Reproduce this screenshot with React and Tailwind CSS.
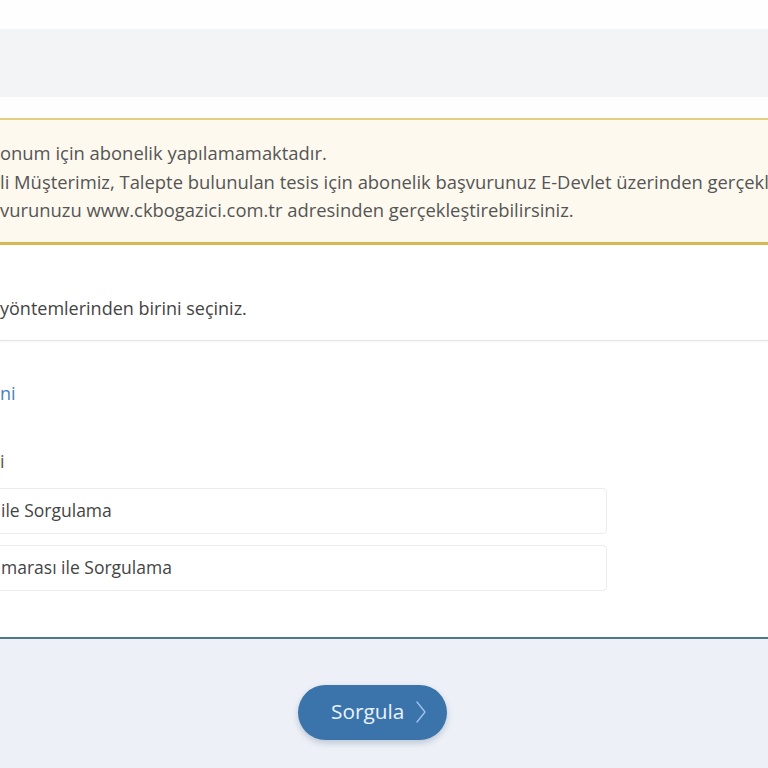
import React from "react";

function Chevron() {
  return (
    <svg width="12" height="24" viewBox="0 0 12 24" fill="none" className="ml-[11px]">
      <path d="M2 2 L10 12 L2 22" stroke="#9fc3ea" strokeWidth="1.4" strokeLinecap="round" strokeLinejoin="round" />
    </svg>
  );
}

export default function App() {
  return (
    <div className="w-[768px] h-[768px] overflow-hidden bg-white text-[#4a4a4a]" style={{ fontFamily: '"Open Sans", "Noto Sans", sans-serif' }}>
      <div className="h-[29px] bg-[#fefefe]" />
      <div className="h-[68px] bg-[#f3f4f6]" />
      <div className="h-[21px] bg-[#fefefe]" />
      <div className="border-t-2 border-b-[3px] border-t-[#e2cf7e] border-b-[#d6b756] bg-[#fdf9ef] pt-[19px] pb-[17px] text-[18.4px] leading-[28.5px] text-[#555555] whitespace-nowrap">
        <div>onum için abonelik yapılamamaktadır.</div>
        <div>li Müşterimiz, Talepte bulunulan tesis için abonelik başvurunuz E-Devlet üzerinden gerçekleştirilemez.</div>
        <div>vurunuzu www.ckbogazici.com.tr adresinden gerçekleştirebilirsiniz.</div>
      </div>
      <div className="pt-[49px] pb-[18px] text-[18px] leading-[28px] text-[#444444] border-b border-[#e4e4e4] shadow-[0_1px_2px_rgba(0,0,0,0.04)] whitespace-nowrap">
        yöntemlerinden birini seçiniz.
      </div>
      <div className="pt-[38px] pb-[46px] border-b-2 border-[#4f7889] whitespace-nowrap">
        <div className="text-[18px] leading-[28px] text-[#4682bd]">ni</div>
        <div className="mt-[40px] text-[18px] leading-[28px] text-[#555555]">i</div>
        <div className="mt-[13px] -ml-[14px] w-[621px] h-[46px] flex items-center pl-[14px] border border-[#ececec] rounded-[4px] text-[17.5px] text-[#444444] bg-white">
          ile Sorgulama
        </div>
        <div className="mt-[11px] -ml-[14px] w-[621px] h-[46px] flex items-center pl-[14px] border border-[#ececec] rounded-[4px] text-[17.5px] text-[#444444] bg-white">
          marası ile Sorgulama
        </div>
      </div>
      <div className="bg-[#edf1f7] h-[200px] pt-[46px]">
        <button className="ml-[298px] w-[149px] h-[55px] rounded-full bg-[#3b73ab] text-[#eaf3ff] text-[20.8px] flex items-center justify-start pl-[33px] shadow-[0_3px_6px_rgba(40,70,110,0.25)]">
          <span>Sorgula</span>
          <Chevron />
        </button>
      </div>
    </div>
  );
}
